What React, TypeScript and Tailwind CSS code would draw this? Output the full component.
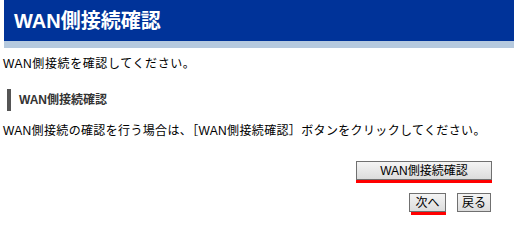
const font = {
  fontFamily: '"Liberation Sans", "Noto Sans CJK JP", sans-serif',
};

const Btn = ({ label, className = "" }: { label: string; className?: string }) => (
  <button
    type="button"
    className={`h-[19px] border border-[#707070] bg-gradient-to-b from-[#f4f4f4] to-[#dcdcdc] text-[12px] leading-none text-black ${className}`}
  >
    {label}
  </button>
);

export default function App() {
  return (
    <div className="w-[514px] h-[225px] bg-white overflow-hidden" style={font}>
      <div className="pl-[4px]">
        <div className="h-[41px] bg-[#003399] flex items-center pl-[10px]">
          <h1 className="text-white font-bold text-[20px] leading-none">
            WAN側接続確認
          </h1>
        </div>
        <div className="h-[7px] bg-[#b5c9de]" />
      </div>

      <div className="pl-[3px] pr-[22px]">
        <p className="mt-[8px] text-[12px] leading-[16px] tracking-[0.6px] text-black">
          WAN側接続を確認してください。
        </p>

        <div className="mt-[17px] ml-[4px] flex items-center h-[22px]">
          <div className="w-[4px] h-[22px] bg-[#555555]" />
          <h2 className="ml-[8px] text-[12px] font-bold text-[#333333] leading-none">
            WAN側接続確認
          </h2>
        </div>

        <p className="mt-[12px] text-[12px] leading-[16px] tracking-[0.35px] text-black whitespace-nowrap">
          WAN側接続の確認を行う場合は、［WAN側接続確認］ボタンをクリックしてください。
        </p>

        <div className="mt-[22px] flex justify-end">
          <div className="flex flex-col">
            <Btn label="WAN側接続確認" className="w-[136px]" />
            <div className="h-[3px] bg-[#ff0000]" />
          </div>
        </div>

        <div className="mt-[10px] flex justify-end items-start gap-[11px] pr-[1px]">
          <div className="flex flex-col">
            <Btn label="次へ" className="w-[37px]" />
            <div className="ml-[2px] w-[35px] h-[3px] bg-[#ff0000]" />
          </div>
          <Btn label="戻る" className="w-[34px]" />
        </div>
      </div>
    </div>
  );
}
